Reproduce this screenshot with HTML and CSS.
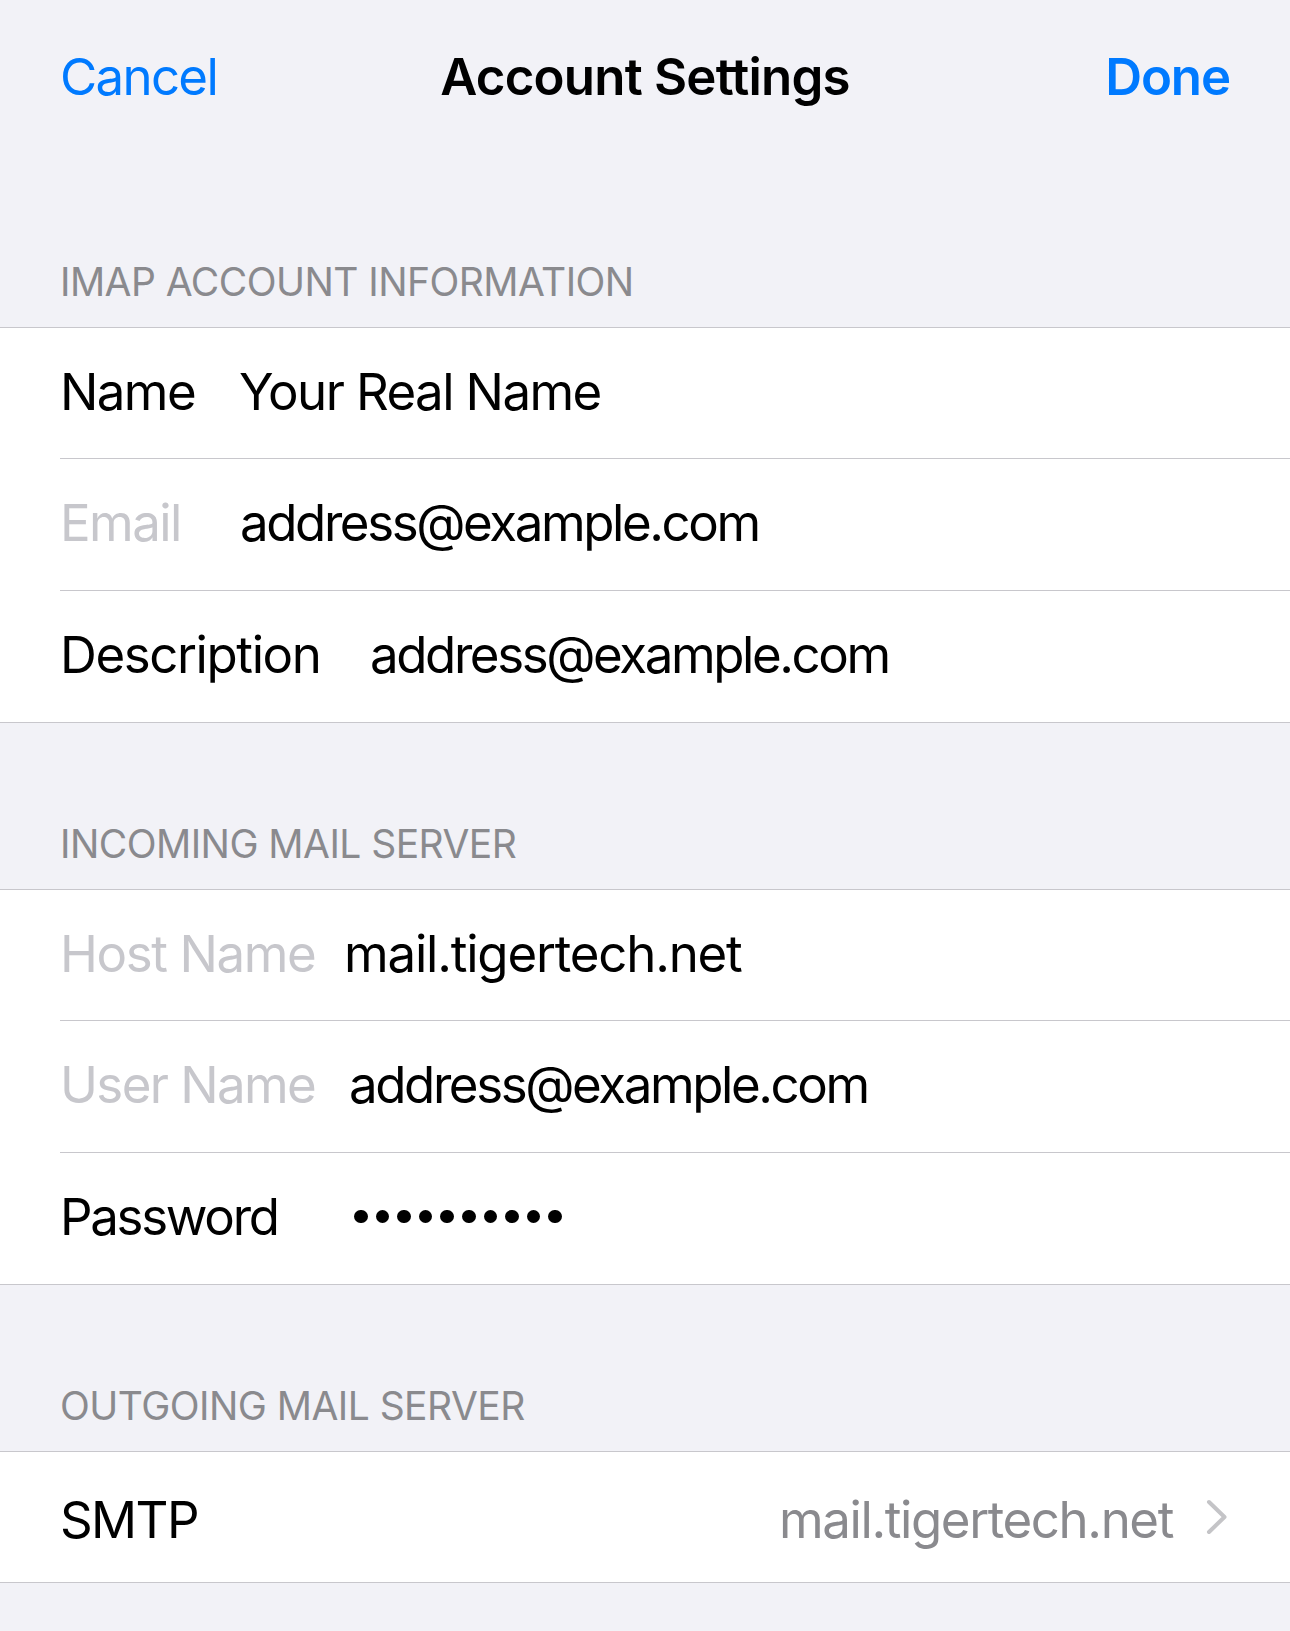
FILE: index.html
```html
<!DOCTYPE html>
<html lang="en">
<head>
<meta charset="utf-8">
<title>Account Settings</title>
<link rel="stylesheet" href="styles.css">
</head>
<body>
<div class="screen">
  <header class="nav">
    <span class="nav-btn">Cancel</span>
    <h1 class="nav-title">Account Settings</h1>
    <span class="nav-btn nav-btn--done">Done</span>
  </header>

  <section class="group">
    <h2 class="group-header">IMAP ACCOUNT INFORMATION</h2>
    <div class="cells">
      <div class="cell cell--name">
        <div class="cell-body">
          <span class="label">Name</span>
          <span class="value">Your Real Name</span>
        </div>
      </div>
      <div class="cell cell--email">
        <div class="cell-body">
          <span class="label label--muted">Email</span>
          <span class="value value--address">address@example.com</span>
        </div>
      </div>
      <div class="cell cell--desc">
        <div class="cell-body">
          <span class="label label--loose">Description</span>
          <span class="value value--address">address@example.com</span>
        </div>
      </div>
    </div>
  </section>

  <section class="group">
    <h2 class="group-header">INCOMING MAIL SERVER</h2>
    <div class="cells">
      <div class="cell cell--host">
        <div class="cell-body">
          <span class="label label--muted label--loose">Host Name</span>
          <span class="value value--host">mail.tigertech.net</span>
        </div>
      </div>
      <div class="cell cell--user">
        <div class="cell-body">
          <span class="label label--muted">User Name</span>
          <span class="value value--address">address@example.com</span>
        </div>
      </div>
      <div class="cell cell--pass">
        <div class="cell-body">
          <span class="label label--pass">Password</span>
          <span class="value dots" aria-label="password">
            <i></i><i></i><i></i><i></i><i></i><i></i><i></i><i></i><i></i><i></i>
          </span>
        </div>
      </div>
    </div>
  </section>

  <section class="group">
    <h2 class="group-header">OUTGOING MAIL SERVER</h2>
    <div class="cells">
      <div class="cell cell--link">
        <div class="cell-body">
          <span class="link-title">SMTP</span>
          <span class="link-detail">mail.tigertech.net</span>
          <svg class="chevron" width="22" height="36" viewBox="0 0 22 36" aria-hidden="true">
            <polyline points="3,3 18.5,18 3,33" fill="none" stroke="#c4c4c7" stroke-width="4" stroke-linecap="round" stroke-linejoin="round"/>
          </svg>
        </div>
      </div>
    </div>
  </section>
</div>
</body>
</html>
```

FILE: styles.css
```css
html, body {
  margin: 0;
  padding: 0;
  background: #f2f2f7;
}

.screen {
  width: 1290px;
  min-height: 1631px;
  background: #f2f2f7;
  font-family: Inter, "Noto Sans", "Liberation Sans", sans-serif;
  color: #000;
}

/* navigation bar */
.nav {
  box-sizing: border-box;
  height: 161px;
  padding: 51px 60px 0 60px;
  display: grid;
  grid-template-columns: 1fr auto 1fr;
  align-items: start;
}

.nav-btn {
  font-size: 51px;
  line-height: 51px;
  color: #007aff;
  justify-self: start;
  letter-spacing: -1.7px;
}

.nav-btn--done {
  justify-self: end;
  font-weight: 600;
  letter-spacing: -1.1px;
}

.nav-title {
  margin: 0;
  font-size: 51px;
  line-height: 51px;
  font-weight: 600;
  letter-spacing: -0.8px;
}

/* grouped table sections */
.group-header {
  box-sizing: border-box;
  height: 166px;
  margin: 0;
  padding: 101px 60px 0 60px;
  font-size: 39px;
  line-height: 39px;
  font-weight: 400;
  color: #8a8a8e;
  letter-spacing: -0.55px;
}

.cells {
  background: #fff;
  border-top: 1px solid #c8c7cc;
  border-bottom: 1px solid #c8c7cc;
}

.cell {
  padding-left: 60px;
}

.cell-body {
  box-sizing: border-box;
  height: 132px;
  padding-bottom: 4px;
  border-bottom: 1px solid #c8c7cc;
  display: grid;
  grid-template-columns: var(--label-w, 180px) 1fr;
  align-items: center;
}

.cell:first-child .cell-body {
  height: 131px;
}

.cell:last-child .cell-body {
  height: 131px;
  border-bottom: 0;
}

.cell:first-child:last-child .cell-body {
  height: 130px;
}

.cell--name  { --label-w: 179px; }
.cell--email { --label-w: 180px; }
.cell--desc  { --label-w: 310px; }
.cell--host  { --label-w: 284px; }
.cell--user  { --label-w: 289px; }
.cell--pass  { --label-w: 294px; }

.label,
.value {
  font-size: 51px;
  line-height: 51px;
  letter-spacing: -1.6px;
  white-space: nowrap;
  color: #000;
}

.value--address {
  letter-spacing: -2.4px;
}

.value--host {
  letter-spacing: -1.2px;
}

.label--loose {
  letter-spacing: -1.4px;
}

.label--pass {
  letter-spacing: -2.3px;
}

.label--muted {
  color: #c7c7cc;
}

.dots {
  display: flex;
  gap: 8px;
  align-items: center;
  height: 51px;
}

.dots i {
  display: block;
  width: 13.6px;
  height: 13.6px;
  border-radius: 50%;
  background: #000;
}

/* disclosure row */
.cell--link .cell-body {
  display: flex;
  align-items: center;
  padding: 4px 62px 0 0;
}

.link-title {
  font-size: 51px;
  line-height: 51px;
  letter-spacing: -1.6px;
}

.link-detail {
  margin-left: auto;
  font-size: 51px;
  line-height: 51px;
  color: #8a8a8e;
  letter-spacing: -1.4px;
}

.chevron {
  flex: none;
  margin-left: 33px;
  margin-top: -4px;
}
```
